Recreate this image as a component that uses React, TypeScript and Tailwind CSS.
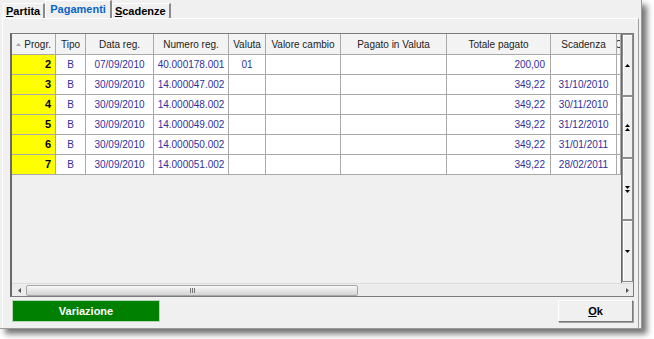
import React from "react";

const rows = [
  { n: "2", data: "07/09/2010", num: "40.000178.001", val: "01", tot: "200,00", scad: "" },
  { n: "3", data: "30/09/2010", num: "14.000047.002", val: "", tot: "349,22", scad: "31/10/2010" },
  { n: "4", data: "30/09/2010", num: "14.000048.002", val: "", tot: "349,22", scad: "30/11/2010" },
  { n: "5", data: "30/09/2010", num: "14.000049.002", val: "", tot: "349,22", scad: "31/12/2010" },
  { n: "6", data: "30/09/2010", num: "14.000050.002", val: "", tot: "349,22", scad: "31/01/2011" },
  { n: "7", data: "30/09/2010", num: "14.000051.002", val: "", tot: "349,22", scad: "28/02/2011" },
];

const headers = [
  "Progr.",
  "Tipo",
  "Data reg.",
  "Numero reg.",
  "Valuta",
  "Valore cambio",
  "Pagato in Valuta",
  "Totale pagato",
  "Scadenza",
  "C",
];

function Tri({ dir, color = "#000" }: { dir: "up" | "down" | "left" | "right"; color?: string }) {
  const d =
    dir === "up"
      ? "M2.5 0L5 3H0z"
      : dir === "down"
      ? "M0 0H5L2.5 3z"
      : dir === "left"
      ? "M3 0V5L0 2.5z"
      : "M0 0L3 2.5L0 5z";
  const w = dir === "up" || dir === "down" ? 5 : 3;
  const h = dir === "up" || dir === "down" ? 3 : 5;
  return (
    <svg width={w} height={h} viewBox={`0 0 ${w} ${h}`}>
      <path d={d} fill={color} />
    </svg>
  );
}

function ScrollBtn({ children }: { children: React.ReactNode }) {
  return (
    <div className="flex h-[62px] flex-col items-center justify-center gap-[1px] border border-[#8c8c8c] bg-[#f0f0f0] shadow-[inset_1px_1px_0_#ffffff]">
      {children}
    </div>
  );
}

export default function App() {
  const cell = "h-[20px] border-r border-b border-[#a9a9a9] flex items-center overflow-hidden whitespace-nowrap";
  return (
    <div className="h-[339px] w-[654px] bg-white font-['Liberation_Sans',Arial,sans-serif]">
      <div className="flex h-[329px] w-[642px] flex-col border-r border-b border-[#9a9a9a] bg-[#f0f0f0] shadow-[5px_5px_6px_rgba(0,0,0,0.55)]">
        {/* tabs */}
        <div className="flex h-[18px] items-end pl-[3px] text-[11px] font-bold">
          <div className="flex h-[15px] items-center border-t border-l border-white border-r-2 border-r-[#8a8a8a] px-[2px] pr-[3px] text-black">
            <span>
              <span className="underline">P</span>artita
            </span>
          </div>
          <div className="flex h-[18px] items-center border-t border-l border-white border-r-2 border-r-[#8a8a8a] px-[4px] text-[#0a64c8]">
            Pagamenti
          </div>
          <div className="flex h-[15px] items-center border-t border-l border-white border-r-2 border-r-[#8a8a8a] px-[2px] pr-[3px] text-black">
            <span>
              <span className="underline">S</span>cadenze
            </span>
          </div>
        </div>

        {/* panel */}
        <div className="mx-[2px] flex-1 border-t border-l border-white border-r border-r-[#a0a0a0] pt-[14px] pl-[7px]">
          <div className="flex h-[264px] w-[624px] flex-col border border-[#7c7c7c] border-l-2 border-l-[#6a6a6a]">
            <div className="flex h-[249px]">
              <div className="flex-1 overflow-hidden bg-[#f0f0f0] text-[10px]">
                <div className="grid grid-cols-[44px_30px_68px_75px_37px_75px_106px_104px_66px_4px]">
                  {headers.map((h, i) => (
                    <div
                      key={h}
                      className={`${cell} h-[21px] bg-[#f3f3f3] text-[#222] ${i === 0 ? "justify-between pl-[4px] pr-[4px]" : "justify-center"}`}
                    >
                      {i === 0 && <Tri dir="up" color="#a8a8a8" />}
                      {h}
                    </div>
                  ))}
                  {rows.map((r) => (
                    <React.Fragment key={r.n}>
                      <div className={`${cell} justify-end bg-[#ffff00] pr-[4px] text-[11px] font-bold text-black`}>{r.n}</div>
                      <div className={`${cell} justify-center bg-white text-[#30309a]`}>B</div>
                      <div className={`${cell} justify-center bg-white text-[#30309a]`}>{r.data}</div>
                      <div className={`${cell} justify-center bg-white text-[#30309a]`}>{r.num}</div>
                      <div className={`${cell} justify-center bg-white text-[#30309a]`}>{r.val}</div>
                      <div className={`${cell} bg-white`} />
                      <div className={`${cell} bg-white`} />
                      <div className={`${cell} justify-end bg-white pr-[5px] text-[#30309a]`}>{r.tot}</div>
                      <div className={`${cell} justify-center bg-white text-[#30309a]`}>{r.scad}</div>
                      <div className={`${cell} bg-white`} />
                    </React.Fragment>
                  ))}
                </div>
              </div>
              {/* vertical scrollbar */}
              <div className="flex w-[12px] flex-col border-l border-[#6a6a6a]">
                <ScrollBtn>
                  <Tri dir="up" />
                </ScrollBtn>
                <ScrollBtn>
                  <Tri dir="up" />
                  <Tri dir="up" />
                </ScrollBtn>
                <ScrollBtn>
                  <Tri dir="down" />
                  <Tri dir="down" />
                </ScrollBtn>
                <ScrollBtn>
                  <Tri dir="down" />
                </ScrollBtn>
              </div>
            </div>
            {/* horizontal scrollbar */}
            <div className="flex h-[13px] items-center border-t border-[#dcdcdc] bg-[#ececec]">
              <div className="flex w-[14px] items-center justify-center">
                <Tri dir="left" color="#555" />
              </div>
              <div className="flex h-[11px] w-[332px] items-center justify-center rounded-[2px] border border-[#a6a6a6] bg-gradient-to-b from-[#f8f8f8] to-[#d4d4d4]">
                <div className="flex gap-[1px]">
                  <div className="h-[5px] w-[1px] bg-[#777]" />
                  <div className="h-[5px] w-[1px] bg-[#777]" />
                  <div className="h-[5px] w-[1px] bg-[#777]" />
                </div>
              </div>
              <div className="flex-1" />
              <div className="flex w-[12px] items-center justify-center">
                <Tri dir="right" color="#555" />
              </div>
            </div>
          </div>

          {/* buttons */}
          <div className="mt-[3px] flex w-[624px] justify-between pl-[2px] pr-[1px]">
            <div className="flex h-[22px] w-[148px] items-center justify-center border border-[#b5d6b5] bg-[#008000] text-[11px] font-bold text-white">
              Variazione
            </div>
            <div className="flex h-[22px] w-[75px] items-center justify-center border border-white border-r-[#7a7a7a] border-b-[#7a7a7a] bg-[#f0f0f0] text-[11px] font-bold text-black shadow-[1px_1px_0_#a0a0a0]">
              <span>
                <span className="underline">O</span>k
              </span>
            </div>
          </div>
        </div>
      </div>
    </div>
  );
}
